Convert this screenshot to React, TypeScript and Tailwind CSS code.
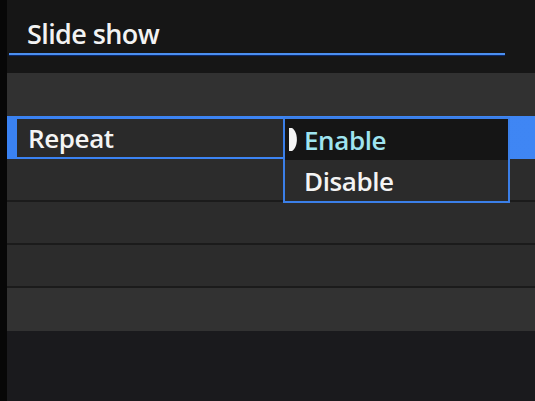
import React from "react";

const font = { fontFamily: '"Open Sans", "Noto Sans", sans-serif' };

function Row({ last = false, light = false }: { last?: boolean; light?: boolean }) {
  return (
    <div
      className={`h-[43px] ${light ? "bg-[#323232]" : "bg-[#2c2c2c]"} ${last ? "" : "border-b-2 border-[#1b1b1b]"}`}
    />
  );
}

export default function App() {
  return (
    <div className="w-[535px] h-[401px] flex bg-[#161616] overflow-hidden" style={font}>
      <div className="w-[7px] h-full bg-[#070707]" />
      <div className="flex-1 flex flex-col">
        {/* Header */}
        <div className="h-[73px] flex flex-col pt-[20px]">
          <div className="h-[28px] leading-[28px] text-[27px] font-semibold text-[#f2f2f2] pl-[20px] tracking-[-0.6px]">
            Slide show
          </div>
          <div className="mt-[5px] ml-[2px] w-[496px] h-[2px] bg-[#4b8ff0] shadow-[0_1px_1px_#0a2a70]" />
        </div>

        {/* Panel */}
        <div className="flex flex-col">
          <div className="h-[43px] bg-[#313131]" />
          {/* Selected row */}
          <div className="relative h-[43px] bg-gradient-to-r from-[#3a82f2] to-[#3f86f4] pt-[3px] pb-[2px] pl-[10px]">
            <div className="w-[267px] h-full bg-[#2a2a2a] flex items-center pl-[11px]">
              <span className="text-[26px] leading-none font-semibold text-[#f4f4f4] tracking-[-0.4px]">Repeat</span>
            </div>
            {/* Dropdown */}
            <div className="absolute left-[276px] top-[1px] w-[227px] h-[86px] border-2 border-[#3b7fe8] flex flex-col z-10">
              <div className="h-[41px] bg-[#151515] flex items-center pl-[4px]">
                <svg width="10" height="23" viewBox="0 0 10 23" className="mr-[5px]">
                  <path d="M0 0 L3 0 C9.5 4 9.5 19 3 23 L0 23 Z" fill="#f4f4f4" />
                </svg>
                <span className="text-[26px] leading-none font-semibold text-[#9fe4f0] tracking-[-0.4px]">Enable</span>
              </div>
              <div className="flex-1 bg-[#2b2b2b] flex items-center pl-[19px]">
                <span className="text-[26px] leading-none font-semibold text-[#f4f4f4] tracking-[-0.4px]">Disable</span>
              </div>
            </div>
          </div>
          <Row />
          <Row />
          <Row />
          <Row last light />
        </div>

        <div className="flex-1 bg-[#1a1a1d]" />
      </div>
    </div>
  );
}
